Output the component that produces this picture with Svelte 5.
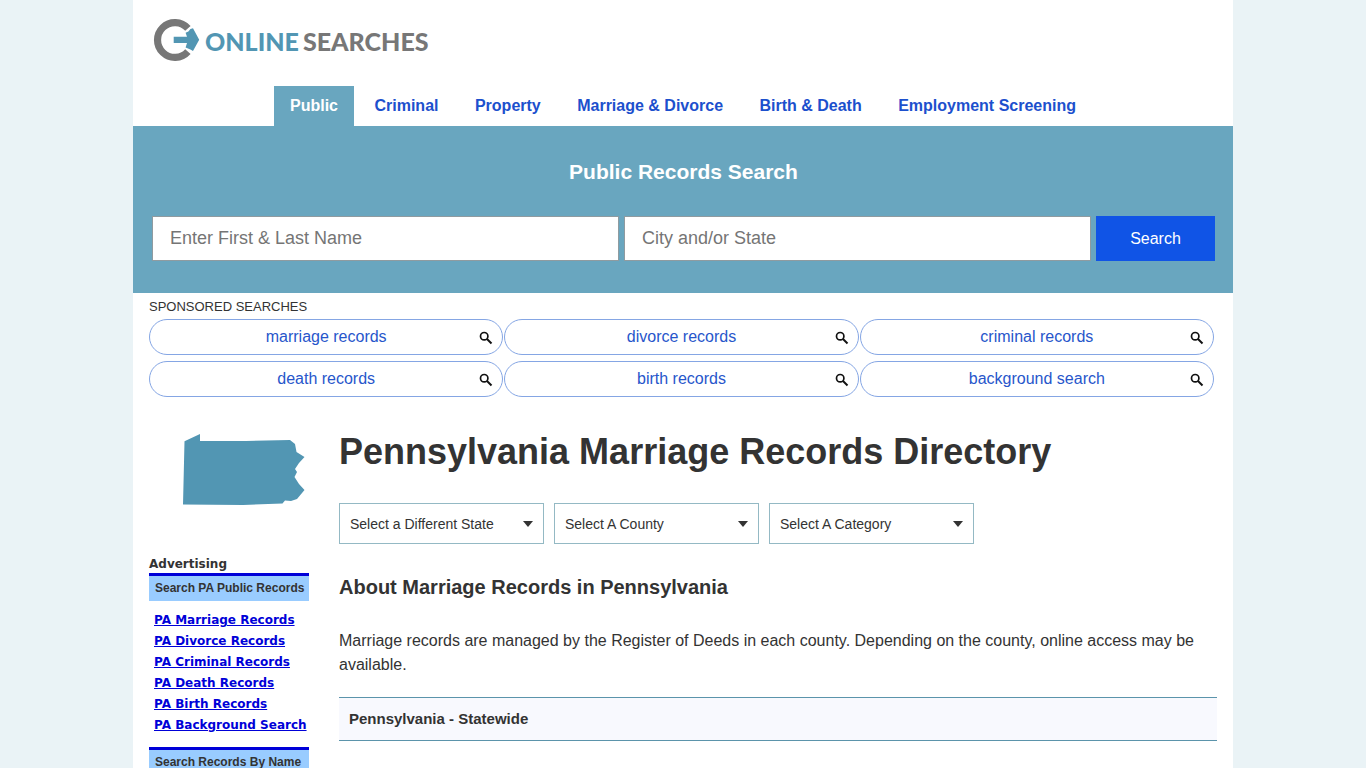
<script>
  const tabs = ['Public', 'Criminal', 'Property', 'Marriage & Divorce', 'Birth & Death', 'Employment Screening'];
  const sponsored = ['marriage records', 'divorce records', 'criminal records', 'death records', 'birth records', 'background search'];
  const filters = ['Select a Different State', 'Select A County', 'Select A Category'];
  const ads = ['PA Marriage Records', 'PA Divorce Records', 'PA Criminal Records', 'PA Death Records', 'PA Birth Records', 'PA Background Search'];
</script>

<div class="page">
  <header>
    <a class="logo" href="#home">
      <svg width="47" height="44" viewBox="0 0 47 44" aria-hidden="true">
        <path d="M34.9 10.4A17.4 17.4 0 1 0 34.9 33.6" fill="none" stroke="#777" stroke-width="7.2" />
        <path d="M20.7 18.7H34L32.6 14.8L35.4 13.6L37.4 10.9L40 10.3L46.2 21.7L40 33L37.4 31.6L32.6 29.4L34 25H20.7Z" fill="#5296b3" />
      </svg>
      <span class="word"><span class="online">ONLINE</span><span>SEARCHES</span></span>
    </a>
    <nav>
      {#each tabs as tab, i}
        <a href="#{tab.toLowerCase().replaceAll(' ', '-')}" class:active={i === 0}>{tab}</a>{' '}
      {/each}
    </nav>
  </header>

  <section class="band">
    <h2>Public Records Search</h2>
    <form onsubmit={(e) => e.preventDefault()}>
      <input type="text" placeholder="Enter First &amp; Last Name" aria-label="First and last name" />
      <input type="text" placeholder="City and/or State" aria-label="City or state" />
      <button type="submit">Search</button>
    </form>
  </section>

  <section class="sponsored">
    <p>SPONSORED SEARCHES</p>
    <div class="pills">
      {#each sponsored as item}
        <a href="#{item.replace(' ', '-')}">
          <span>{item}</span>
          <svg width="14" height="14" viewBox="0 0 14 14" aria-hidden="true">
            <circle cx="5.2" cy="5.2" r="3.7" fill="none" stroke="#111" stroke-width="1.7" />
            <path d="M8 8L12.5 12.5" stroke="#111" stroke-width="2" />
          </svg>
        </a>
      {/each}
    </div>
  </section>

  <div class="columns">
    <aside>
      <svg class="state" width="122" height="72" viewBox="0 0 122 72" role="img" aria-label="Pennsylvania">
        <path d="M1.5 7.3L17 0V7H63L107 6L112 10L113.5 18L121.5 23L116 29L112 35L114 38L111.5 43L116 50L121.5 56L114 65L108 67L102 66.5L99.5 69.5L60 71L0 70.5Z" fill="#5296b3" />
      </svg>
      <p class="label">Advertising</p>
      <h3>Search PA Public Records</h3>
      <ul>
        {#each ads as ad}
          <li><a href="#{ad.toLowerCase().replaceAll(' ', '-')}">{ad}</a></li>
        {/each}
      </ul>
      <h3>Search Records By Name</h3>
    </aside>
    <main>
      <h1>Pennsylvania Marriage Records Directory</h1>
      <div class="filters">
        {#each filters as filter}
          <div class="select">
            <select aria-label={filter}><option>{filter}</option></select>
            <svg width="10" height="6" viewBox="0 0 10 6" aria-hidden="true"><path d="M0 0H10L5 6Z" fill="#333" /></svg>
          </div>
        {/each}
      </div>
      <h2>About Marriage Records in Pennsylvania</h2>
      <p>Marriage records are managed by the Register of Deeds in each county. Depending on the county, online access may be available.</p>
      <h4>Pennsylvania - Statewide</h4>
    </main>
  </div>
</div>

<style>
  :global(body) { background: #eaf3f6; }
  .page, .page * { box-sizing: border-box; }
  .page {
    max-width: 1100px;
    height: 100vh;
    overflow: hidden;
    margin: 0 auto;
    background: #fff;
    color: #333;
    font: 16px/24px "Liberation Sans", Arial, sans-serif;
  }
  h1, h2, h3, h4, p, ul { margin: 0; padding: 0; }
  header { padding-top: 18px; }
  .logo { display: flex; align-items: center; width: fit-content; height: 44px; margin-left: 20px; gap: 5px; text-decoration: none; color: #777; }
  .word { display: flex; gap: 4px; padding-top: 2px; font: 900 25px/44px Lato, sans-serif; }
  .online { color: #5296b3; }
  nav { margin-top: 24px; text-align: center; line-height: 40px; }
  nav a { display: inline-block; padding: 0 16px; font-weight: 700; color: #1c50cd; text-decoration: none; vertical-align: top; }
  nav a.active { background: #69a6bf; color: #fff; }
  .band { padding: 34px 18px 32px 19px; background: #69a6bf; }
  .band h2 { font-size: 21px; line-height: 24px; text-align: center; color: #fff; }
  form { display: flex; gap: 5px; margin-top: 32px; }
  input {
    flex: 1;
    min-width: 0;
    height: 45px;
    padding: 0 17px;
    border: 1px solid #8f9ba0;
    background: #fff;
    font: 18px "Liberation Sans", Arial, sans-serif;
    color: #333;
  }
  input::placeholder { color: #757575; }
  button { width: 119px; height: 45px; border: 0; background: #1054e6; color: #fff; font: 16px "Liberation Sans", Arial, sans-serif; }
  .sponsored { padding: 2px 19px 0 16px; }
  .sponsored p { font-size: 13px; }
  .pills { display: grid; grid-template-columns: repeat(3, 1fr); gap: 6px 1px; }
  .pills a { display: flex; align-items: center; height: 36px; padding: 0 9px 0 23px; border: 1px solid #85a6e4; border-radius: 18px; color: #2756cb; text-decoration: none; }
  .pills span { flex: 1; text-align: center; }
  .pills svg { margin-top: 2px; }
  .columns { display: flex; gap: 30px; padding: 34px 16px 0; }
  aside { flex: 0 0 160px; min-width: 0; }
  .state { display: block; margin: 3px 0 0 34px; }
  .label { margin-top: 50px; font: 700 12px/17px "DejaVu Sans", sans-serif; }
  h3 { padding: 0 0 0 6px; border-top: 3px solid #0000d8; background: #99ccff; font-size: 12px; line-height: 25px; white-space: nowrap; }
  ul { margin: 9px 0 11px; list-style: none; }
  li { padding-left: 5px; font: 700 12px/21px "DejaVu Sans", sans-serif; white-space: nowrap; }
  li a { color: #0000d8; }
  main { flex: 1; min-width: 0; }
  h1 { font-size: 36px; line-height: 42px; }
  .filters { display: flex; gap: 10px; margin-top: 30px; }
  .select { position: relative; flex: 0 1 205px; }
  select { appearance: none; width: 100%; height: 41px; padding: 0 10px; border: 1px solid #94b9c4; border-radius: 0; background: #fff; color: #333; font: 14px "Liberation Sans", Arial, sans-serif; }
  .select svg { position: absolute; top: 18px; right: 11px; pointer-events: none; }
  main h2 { margin-top: 31px; font-size: 20px; line-height: 24px; }
  main p { margin-top: 30px; }
  h4 { margin-top: 20px; padding: 0 10px; border: 1px solid #5b94ab; border-width: 1px 0; background: #f8f9fe; font-size: 15px; line-height: 42px; }
</style>
